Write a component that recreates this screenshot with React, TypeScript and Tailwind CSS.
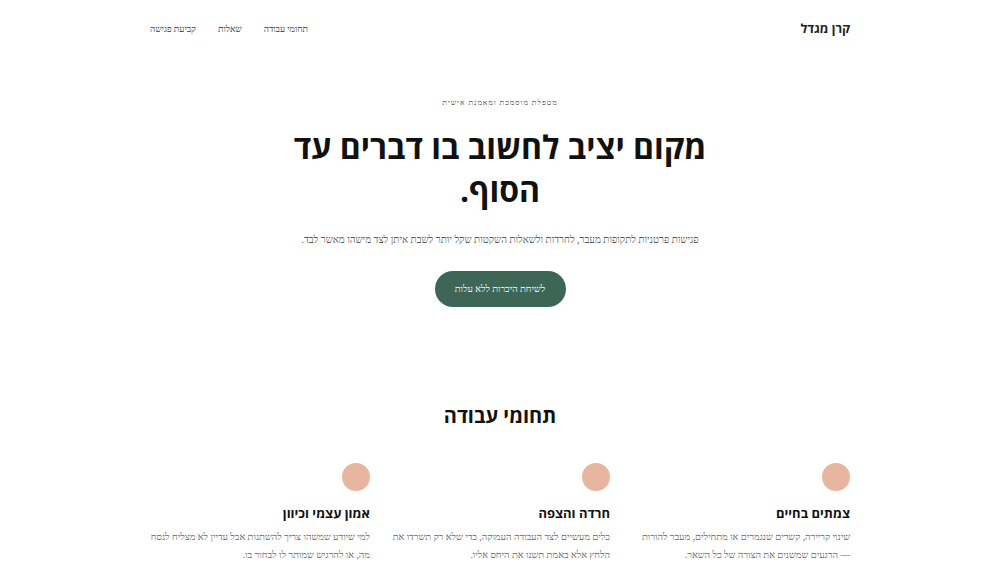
import React from 'react';

const areas = [
  {
    title: 'צמתים בחיים',
    text: 'שינוי קריירה, קשרים שנגמרים או מתחילים, מעבר להורות — הרגעים שמשנים את הצורה של כל השאר.',
  },
  {
    title: 'חרדה והצפה',
    text: 'כלים מעשיים לצד העבודה העמוקה, כדי שלא רק תשרדו את הלחץ אלא באמת תשנו את היחס אליו.',
  },
  {
    title: 'אמון עצמי וכיוון',
    text: 'למי שיודע שמשהו צריך להשתנות אבל עדיין לא מצליח לנסח מה, או להרגיש שמותר לו לבחור בו.',
  },
];

export default function App() {
  return (
    <div dir="rtl" className="min-h-screen bg-white text-[#1a1a1a]" style={{ fontFamily: '"Liberation Serif", serif' }}>
      <div className="mx-auto w-[700px]">
        {/* Header */}
        <header className="flex items-center justify-between h-[57px] pt-[2px]">
          <div className="text-[12.5px] font-bold font-['Open_Sans',sans-serif] text-[#222]">קרן מגדל</div>
          <nav className="flex items-center gap-[22px] text-[9px] text-[#333]">
            <a>תחומי עבודה</a>
            <a>שאלות</a>
            <a>קביעת פגישה</a>
          </nav>
        </header>

        {/* Hero */}
        <section className="flex flex-col items-center text-center pt-[40px]">
          <div className="text-[7.5px] tracking-[1px] text-[#555]">מטפלת מוסמכת ומאמנת אישית</div>
          <h1 className="mt-[17px] w-[430px] text-[32px] leading-[43px] font-bold font-['Open_Sans',sans-serif] text-[#111]">
            מקום יציב לחשוב בו דברים עד הסוף.
          </h1>
          <p className="mt-[21px] text-[10px] text-[#555]">
            פגישות פרטניות לתקופות מעבר, לחרדות ולשאלות השקטות שקל יותר לשבת איתן לצד מישהו מאשר לבד.
          </p>
          <button className="mt-[24px] w-[131px] h-[36px] rounded-full bg-[#3e6657] text-white text-[9.5px]">
            לשיחת היכרות ללא עלות
          </button>
        </section>

        {/* Areas */}
        <section className="pt-[97px]">
          <h2 className="text-center text-[20px] leading-[24px] font-bold font-['Open_Sans',sans-serif] text-[#111]">תחומי עבודה</h2>
          <div className="mt-[35px] grid grid-cols-3 gap-5">
            {areas.map((a) => (
              <div key={a.title}>
                <div className="w-[28px] h-[28px] rounded-full bg-[#e6b6a0]" />
                <h3 className="mt-[13px] text-[13px] leading-[18px] font-bold font-['Open_Sans',sans-serif] text-[#111]">{a.title}</h3>
                <p className="mt-[6px] text-[9.6px] leading-[18px] text-[#666]">{a.text}</p>
              </div>
            ))}
          </div>
        </section>
      </div>
    </div>
  );
}
